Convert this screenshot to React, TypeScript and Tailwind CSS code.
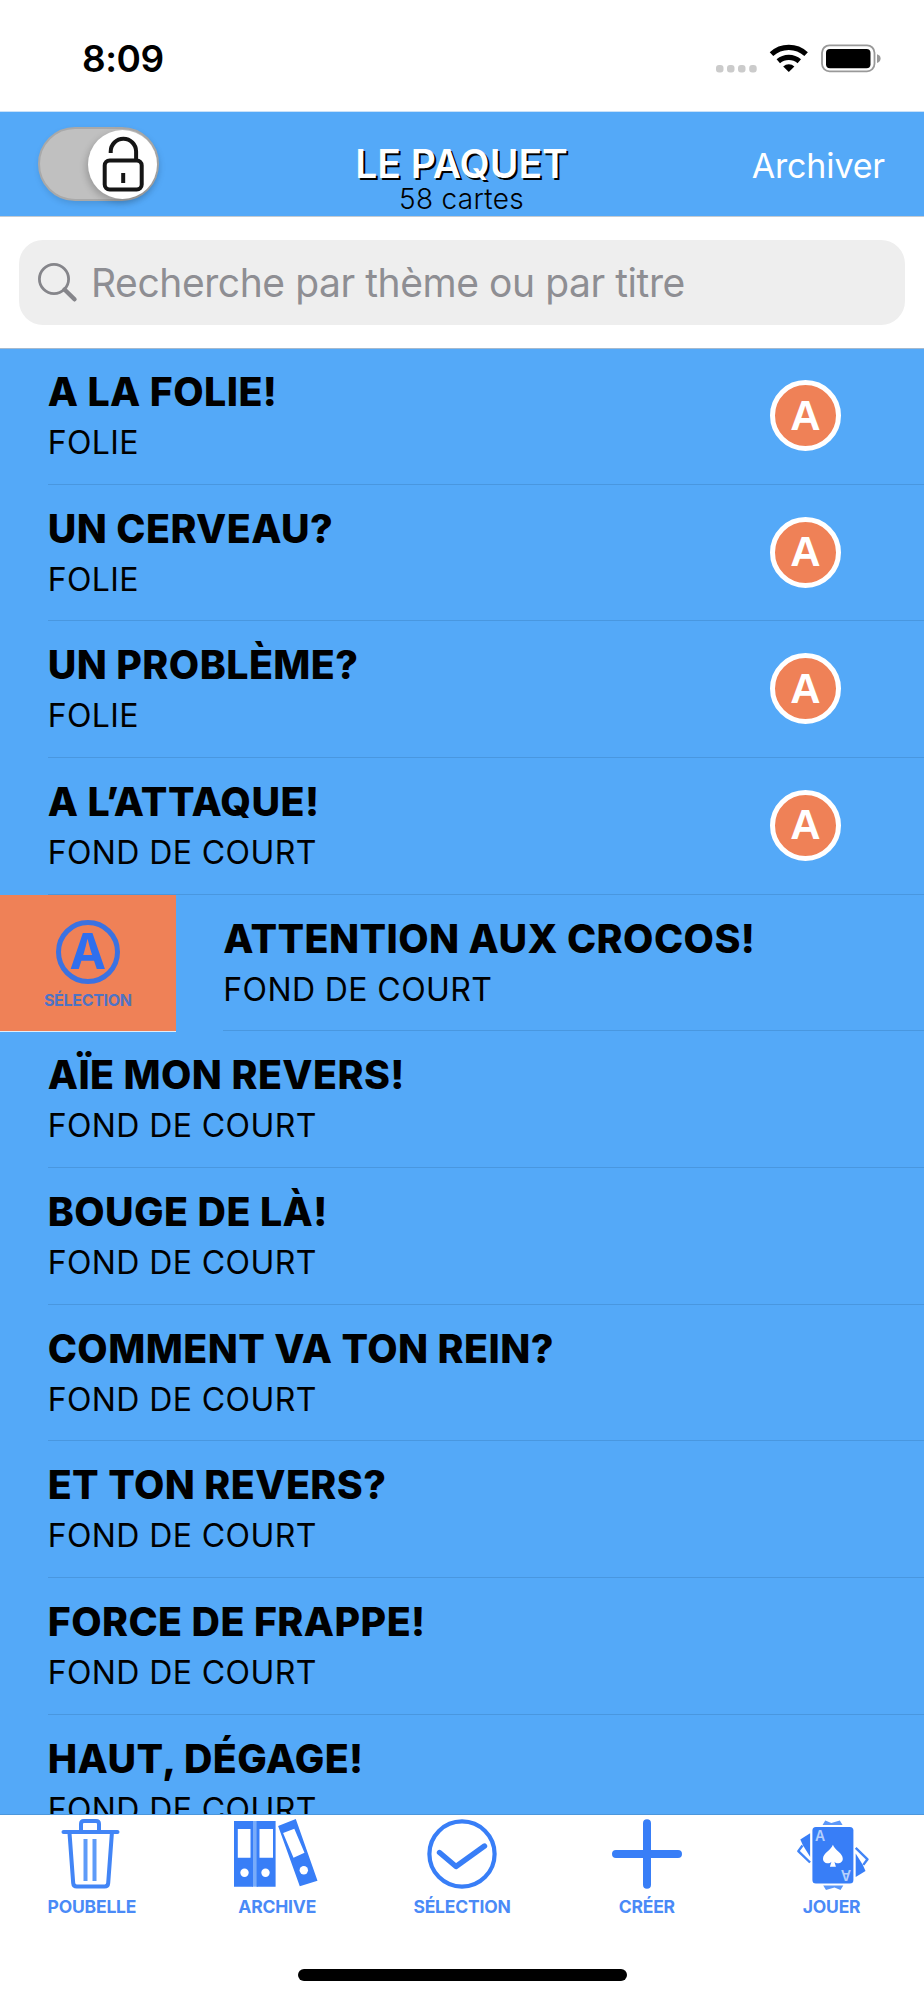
import { type ReactNode } from "react";

interface Card {
    title: string;
    theme: string;
    selected?: boolean;
    swiped?: boolean;
}

const CARDS: Card[] = [
    { title: "A LA FOLIE!", theme: "FOLIE", selected: true },
    { title: "UN CERVEAU?", theme: "FOLIE", selected: true },
    { title: "UN PROBLÈME?", theme: "FOLIE", selected: true },
    { title: "A L’ATTAQUE!", theme: "FOND DE COURT", selected: true },
    { title: "ATTENTION AUX CROCOS!", theme: "FOND DE COURT", swiped: true },
    { title: "AÏE MON REVERS!", theme: "FOND DE COURT" },
    { title: "BOUGE DE LÀ!", theme: "FOND DE COURT" },
    { title: "COMMENT VA TON REIN?", theme: "FOND DE COURT" },
    { title: "ET TON REVERS?", theme: "FOND DE COURT" },
    { title: "FORCE DE FRAPPE!", theme: "FOND DE COURT" },
    { title: "HAUT, DÉGAGE!", theme: "FOND DE COURT" },
];

function StatusBar() {
    return (
        <div className="flex h-[112px] shrink-0 items-start justify-between border-b border-[#c9e1f8] bg-white pt-[35px] pr-[43px] pl-[82px]">
            <span className="text-[37px] leading-[48px] font-semibold tracking-[-0.5px]">8:09</span>
            <svg width="166" height="32" viewBox="0 0 166 32" className="mt-[7px]">
                <g fill="#cbcbcb">
                    <rect x="1" y="23" width="7.5" height="7.5" rx="3" />
                    <rect x="12" y="23" width="7.5" height="7.5" rx="3" />
                    <rect x="23" y="23" width="7.5" height="7.5" rx="3" />
                    <rect x="34.2" y="23" width="7.5" height="7.5" rx="3" />
                </g>
                <g fill="none" stroke="#000" strokeWidth="5.2">
                    <path d="M56.5 12.2a25.5 25.5 0 0 1 34.6 0" />
                    <path d="M63.3 19.3a16 16 0 0 1 21 0" />
                </g>
                <path d="M73.8 30l-5.6-5.6a8.3 8.3 0 0 1 11.2 0z" />
                <rect x="107" y="3.3" width="52.5" height="26" rx="7.5" fill="none" stroke="#999" strokeWidth="1.8" />
                <rect x="111" y="7" width="44.5" height="19.3" rx="4" />
                <path d="M162 12.2q3.6 1 3.6 4.4t-3.6 4.4z" fill="#999" />
            </svg>
        </div>
    );
}

function LockToggle() {
    return (
        <button
            type="button"
            aria-label="Verrouiller"
            className="flex h-[74px] w-[121px] items-center justify-end rounded-full border-2 border-[#a9a9a9] bg-[#c0c0c0] shadow-[1px_3px_6px_rgba(0,0,0,0.12)]"
        >
            <span className="flex h-[69px] w-[69px] items-center justify-center rounded-full bg-white shadow-[-2px_3px_7px_rgba(0,0,0,0.2)]">
                <svg width="44" height="56" viewBox="0 0 44 56" fill="none" stroke="#151515" strokeWidth="4">
                    <rect x="3.7" y="24.5" width="37" height="29" rx="5" />
                    <path d="M9.7 17v-1.5a12.6 12.6 0 0 1 25.4 0v9" />
                    <path d="M22.2 37v10" />
                </svg>
            </span>
        </button>
    );
}

function Header() {
    return (
        <header className="grid h-[105px] shrink-0 grid-cols-[1fr_auto_1fr] items-start border-b border-[#c3cbd3] bg-[#54a9f8] pr-[39px] pl-[38px]">
            <div className="pt-[15px]">
                <LockToggle />
            </div>
            <div className="flex flex-col items-center pt-[32px]">
                <h1 className="text-[39px] leading-[40px] font-semibold text-white [text-shadow:2px_2px_0_#000]">
                    LE PAQUET
                </h1>
                <p className="text-[28px] leading-[30px] font-light tracking-[0.3px]">58 cartes</p>
            </div>
            <button
                type="button"
                className="justify-self-end pt-[30px] text-[34px] leading-[48px] tracking-[-0.15px] text-white"
            >
                Archiver
            </button>
        </header>
    );
}

function SearchBar() {
    return (
        <div className="h-[132px] shrink-0 border-b border-[#a5b9ce] bg-white px-[19px] pt-[23px]">
            <div className="flex h-[85px] items-center rounded-[24px] bg-[#eee] pl-[18px]">
                <svg width="42" height="42" viewBox="0 0 42 42" fill="none" stroke="#85858a">
                    <circle cx="17" cy="17" r="14.6" strokeWidth="2.8" />
                    <path d="M27.5 27.5l10 9.8" strokeWidth="4.4" strokeLinecap="round" />
                </svg>
                <span className="mt-px ml-[12px] text-[39px] leading-[48px] tracking-[-0.43px] text-[#8e8e93]">
                    Recherche par thème ou par titre
                </span>
            </div>
        </div>
    );
}

function SwipeAction() {
    return (
        <button
            type="button"
            className="flex h-[137px] w-[175.6px] shrink-0 flex-col items-center border-b border-[#dfeefb] bg-[#ef8157] pt-[25px]"
        >
            <span className="flex h-[64px] w-[64px] items-center justify-center rounded-full border-[5px] border-[#3b72e2] text-[49px] leading-none font-bold text-[#2f6fee]">
                A
            </span>
            <span className="mt-[4px] text-[16px] leading-6 font-bold tracking-[-0.3px] text-[#4f73c4]">
                SÉLECTION
            </span>
        </button>
    );
}

function CardRow({ card }: { card: Card }) {
    return (
        <li className="flex h-[136.67px] shrink-0 first:-mt-px">
            {card.swiped && <SwipeAction />}
            <div className="ml-[47.7px] flex flex-1 items-start justify-between border-b border-[#4997df] pr-[83px]">
                <div className="pt-[20px]">
                    <p className="text-[39.3px] leading-[48px] font-extrabold tracking-[0.45px] whitespace-nowrap">
                        {card.title}
                    </p>
                    <p className="mt-[3px] text-[32px] leading-[48px] tracking-[0.4px]">{card.theme}</p>
                </div>
                {card.selected && (
                    <span className="mt-[32px] flex h-[71px] w-[71px] items-center justify-center rounded-full border-[5px] border-white bg-[#ef8157] font-['Liberation_Sans'] text-[42px] leading-none font-bold text-white">
                        A
                    </span>
                )}
            </div>
        </li>
    );
}

function TrashIcon() {
    return (
        <g fill="none" stroke="#4285f6" strokeWidth="4" strokeLinejoin="round">
            <path d="M39 15V8q0-3 3-3h12q3 0 3 3v7" />
            <path d="M21.5 16h54" strokeLinecap="round" />
            <path d="M27.5 17l3.7 50q.3 3.6 3.5 3.6h28q3.2 0 3.5-3.6l3.7-50" />
            <path d="M43.5 23v42M52.5 23v42" stroke="#5e9bf8" />
        </g>
    );
}

function BindersIcon() {
    return (
        <>
            <path d="M25 5h6v65.7h-6z" fill="#78abfa" />
            <path d="M7 5h19v65.7H7zM29.6 5h19v65.7h-19zM51.1 10l17.7-7 21.7 61.7-17.7 5.6z" fill="#387ef7" />
            <g fill="#fff">
                <path d="M10.8 13h12.7v28.7H10.8zM32.5 13H46v28.7H32.5zM56.1 17l11.2-4.2 10.2 24-11 4.9z" />
                <circle cx="17.5" cy="56.7" r="4.2" />
                <circle cx="38.5" cy="56.7" r="4.2" />
                <circle cx="76.8" cy="54.3" r="4.2" />
            </g>
        </>
    );
}

function CheckIcon() {
    return (
        <g fill="none" stroke="#387ef7" strokeLinecap="round" strokeLinejoin="round">
            <circle cx="50" cy="38" r="32.6" strokeWidth="4.2" />
            <path d="M27.5 36.5l16.5 14 28.5-20.5" strokeWidth="5.4" />
        </g>
    );
}

function PlusIcon() {
    return <path d="M50 7.3v61.4M19 38h62" stroke="#387ef7" strokeWidth="8" strokeLinecap="round" />;
}

// Half of the cards fanned out behind the ace; drawn twice, the second one upside down
function FannedCards() {
    return (
        <>
            <path d="M18.3 23.5l9.8-6.2v23.5l-7.2-11.5z" fill="#387ef7" />
            <path d="M20.5 29.5l-4.2 5.6 11.8 11.4" fill="none" stroke="#4285f6" strokeWidth="2.4" strokeLinejoin="round" />
            <path d="M40.5 9l2.8-4.6 6 2.6 8.5-2.6 2.8 4.6z" fill="#5c98f9" />
        </>
    );
}

function DeckIcon() {
    return (
        <>
            <FannedCards />
            <g transform="rotate(180 50.9 39.2)">
                <FannedCards />
            </g>
            <rect x="30.4" y="11" width="41" height="56.4" rx="3.5" fill="#387ef7" />
            <path
                d="M50.9 28.7c2 5.5 9.9 8.5 9.9 14 0 4.5-5.8 6-8.4 3l1.5 5h-6l1.5-5c-2.6 3-8.4 1.5-8.4-3 0-5.5 7.9-8.5 9.9-14z"
                fill="#fff"
            />
            <g fill="#b5d0fc" fontSize="14" fontWeight="600" textAnchor="middle">
                <text x="38" y="24.8">A</text>
                <text x="38" y="24.8" transform="rotate(180 50.9 39.2)">A</text>
            </g>
        </>
    );
}

const TABS: { label: string; icon: ReactNode }[] = [
    { label: "POUBELLE", icon: <TrashIcon /> },
    { label: "ARCHIVE", icon: <BindersIcon /> },
    { label: "SÉLECTION", icon: <CheckIcon /> },
    { label: "CRÉER", icon: <PlusIcon /> },
    { label: "JOUER", icon: <DeckIcon /> },
];

function TabBar() {
    return (
        <nav className="flex h-[185px] shrink-0 flex-col items-center bg-white">
            <div className="grid w-full grid-cols-5">
                {TABS.map((tab) => (
                    <button key={tab.label} type="button" className="flex flex-col items-center pt-px first:pr-px">
                        <svg width="100" height="78" viewBox="0 0 100 78">
                            {tab.icon}
                        </svg>
                        <span className="mt-px text-[17.5px] leading-6 font-bold tracking-[-0.2px] text-[#4a8af7]">
                            {tab.label}
                        </span>
                    </button>
                ))}
            </div>
            <div className="mt-auto mb-[19px] h-[12px] w-[329px] rounded-full bg-black" />
        </nav>
    );
}

export default function App() {
    return (
        <div className="flex h-[2000px] w-[924px] flex-col overflow-hidden bg-white font-['Inter','Liberation_Sans',sans-serif] text-black">
            <StatusBar />
            <Header />
            <SearchBar />
            <ul className="flex min-h-0 flex-1 flex-col overflow-hidden border-b border-[#4c97dc] bg-[#54a9f8]">
                {CARDS.map((card) => (
                    <CardRow key={card.title} card={card} />
                ))}
            </ul>
            <TabBar />
        </div>
    );
}
